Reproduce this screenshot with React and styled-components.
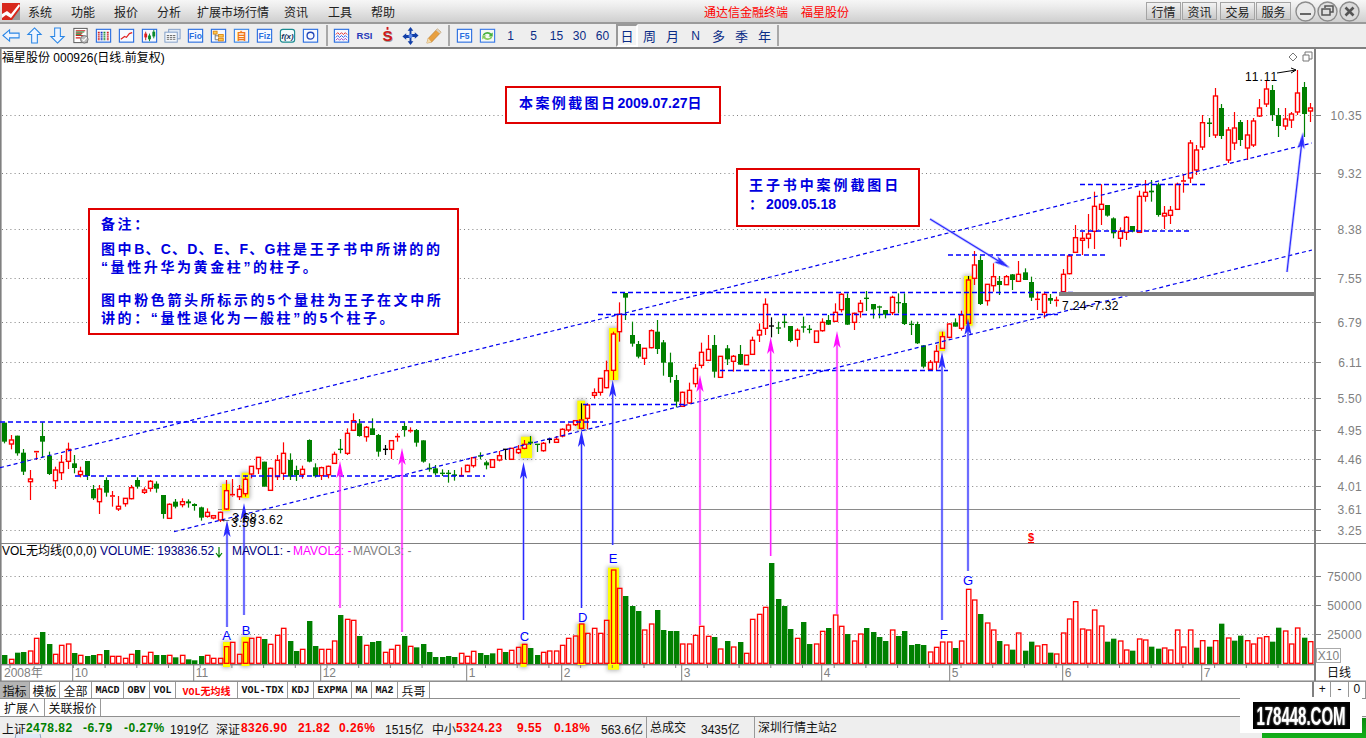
import React from 'react';
import styled, { createGlobalStyle } from 'styled-components';

const CJK = '"Liberation Sans", "Noto Sans CJK SC", sans-serif';

const Global = createGlobalStyle`
  html, body { margin: 0; padding: 0; background: #fff; overflow: hidden; }
  body { font-family: ${CJK}; font-size: 12px; color: #111; }
`;

const Page = styled.div`
  position: relative; width: 1366px; height: 738px; display: flex; flex-direction: column; overflow: hidden; background: #fff;
`;
const TitleBar = styled.div`
  height: 22px; flex: none; display: flex; align-items: center;
  background: linear-gradient(#f6f6f6, #ececec 30%, #cfcfcf);
  border-bottom: 2px solid #9a9a9a;
`;
const Logo = styled.svg`width: 18px; height: 18px; margin: 0 8px 0 2px; flex: none;`;
const MenuItem = styled.span`width: ${p => p.$w}px; flex: none; font-size: 12px; color: #222; white-space: nowrap;`;
const AppName = styled.div`
  position: relative; flex: none; width: 440px; color: #f00; font-size: 12px; white-space: nowrap; display: flex; gap: 13px; padding-left: 290px; box-sizing: border-box;
`;
const ShellGroup = styled.div`margin-left: auto; display: flex; align-items: center; padding-right: 6px;`;
const ShellButton = styled.button`
  width: 35px; height: 18px; margin-right: ${p => p.$gap}px; padding: 0; border: 1px solid #a4a4a4; background: linear-gradient(#f2f2f2, #c9c9c9);
  font: 12px ${CJK}; color: #222; display: flex; align-items: center; justify-content: center;
`;
const RoundButton = styled.svg`width: 21px; height: 21px; flex: none; margin-left: 1px;`;

const Toolbar = styled.div`
  height: 23px; flex: none; display: flex; align-items: center; background: #eeeeee; border-bottom: 2px solid #808080;
`;
const ToolSlot = styled.div`
  width: ${p => p.$w || 23}px; height: 23px; flex: none; display: flex; align-items: center; justify-content: center;
  svg { width: 19px; height: 19px; display: block; }
`;
const Sep = styled.div`width: 2px; height: 21px; flex: none; background: #a8a8a8; margin: 0 ${p => p.$r}px 0 ${p => p.$l}px;`;
const Period = styled.div`
  width: ${p => p.$w || 23}px; height: 23px; flex: none; display: flex; align-items: center; justify-content: center;
  color: #0a2c86; font-size: ${p => p.$cjk ? 13 : 12}px; box-sizing: border-box;
  margin-left: ${p => p.$ml || 0}px;
  ${p => p.$active ? 'border: 2px solid; border-color: #999 #fff #fff #999; background: #f4f4f4;' : ''}
`;

const Workspace = styled.div`position: relative; height: 632px; flex: none; background: #fff;`;
const ChartSvg = styled.svg`display: block;`;

const AxisText = styled.text`font: 12px ${CJK}; fill: #808080;`;
const AxisCJK = styled.text`font: 12px ${CJK}; fill: #111;`;
const Legend = styled.text`font: 12px ${CJK}; fill: ${p => p.$c || '#000'};`;
const PriceNote = styled.text`font: 12px ${CJK}; fill: #000; letter-spacing: ${p => p.$ls ?? 0.5}px;`;
const PointLabel = styled.text`font: 13px ${CJK}; fill: #0000ff; text-anchor: middle;`;
const DollarMark = styled.text`font: bold 11px ${CJK}; fill: #f00; text-anchor: middle; text-decoration: underline;`;

const Note = styled.div`
  position: absolute; box-sizing: border-box; left: ${p => p.$x}px; top: ${p => p.$y - 49}px; width: ${p => p.$w}px; height: ${p => p.$h}px;
  border: 2px solid #e00000; background: #fff; color: #0000e0; font: bold 14px "Liberation Sans", "Noto Sans CJK SC", sans-serif;
  padding: ${p => p.$pad}; letter-spacing: ${p => p.$ls}px; line-height: ${p => p.$lh}px; white-space: nowrap;
`;
const NoteLine = styled.div`margin-top: ${p => p.$mt || 0}px;`;
const NoteDate = styled.span`letter-spacing: 0px;`;
const NoteLatin = styled.span`letter-spacing: 1.2px;`;

const TabBar = styled.div`height: 16px; flex: none; display: flex; border-top: 1px solid #8f8f8f; border-bottom: 1px solid #8f8f8f; background: #fff;`;
const Tab = styled.div`
  width: ${p => p.$w}px; flex: none; box-sizing: border-box; display: flex; align-items: center; justify-content: center;
  border-right: 1px solid #999; background: ${p => p.$active ? '#b4b4b4' : '#fff'}; color: ${p => p.$red ? '#f00' : '#111'};
  font: ${p => p.$mono ? 'bold 10px "Liberation Mono", "Noto Sans CJK SC", monospace' : `12px ${CJK}`}; white-space: nowrap;
`;
const ZoomGroup = styled.div`margin-left: auto; display: flex; width: 52px; border-left: 2px solid #808080;`;
const ZoomCell = styled.div`flex: 1; text-align: center; font: 12px/15px ${CJK}; border-right: 1px solid #999;`;
const ExtBar = styled(TabBar)`height: 17px; border-top: none;`;
const StatusBar = styled.div`
  position: relative; height: 22px; flex: none; display: flex; align-items: center; background: #eeeeee; padding-left: 2px; box-sizing: border-box; overflow: hidden;
`;
const Stat = styled.span`
  width: ${p => p.$w}px; flex: none; white-space: nowrap; color: ${p => p.$c || '#111'};
  font: ${p => p.$b ? 'bold' : 'normal'} 12px ${CJK}; letter-spacing: ${p => p.$b ? 0.45 : 0}px;
  ${p => p.$sep ? 'border-left: 1px solid #999; height: 22px; line-height: 22px; padding-left: 3px; box-sizing: border-box;' : ''}
`;
const Globe = styled.svg`position: absolute; left: 14px; bottom: 0; width: 28px; height: 5px;`;

const GreenTab = styled.div`
  position: absolute; left: 1262px; top: 718px; width: 110px; height: 30px; border-radius: 6px; background: linear-gradient(#0c8a10, #13b21a 70%, #0a7a0e);
`;
const WatermarkBox = styled.div`
  position: absolute; left: 1240px; top: 697px; width: 122px; height: 36px; background: #fff; display: flex; align-items: center; justify-content: center;
`;
const WatermarkPill = styled.div`
  width: 97px; height: 27px; background: #000; display: flex; align-items: center; justify-content: center;
`;
const WatermarkText = styled.span`
  display: inline-block; width: 97px; text-align: center; color: #fff; font: bold 15px/27px "Liberation Sans", sans-serif; transform: scale(1, 1.7); white-space: nowrap; text-shadow: 0 0 1.5px #bbb;
`;

/* ---------- toolbar icons ---------- */
const B = '#2b6fe0';
const Frame = ({ c = B, f = '#f6f9ff' }) => <rect x="2.5" y="3.5" width="15" height="13.5" fill={f} stroke={c} strokeWidth="1.2" />;
const IconText = styled.text`font: bold ${p => p.$s || 9}px "Liberation Sans", sans-serif; fill: ${p => p.$c || B}; text-anchor: middle;`;

const ICONS = {
  back: <polygon points="1,10 8,4 8,7.5 18,7.5 18,12.5 8,12.5 8,16" fill="#eef5ff" stroke="#2a86e6" strokeWidth="1.1" />,
  up: <polygon points="10,2 17,9 13,9 13,18 7,18 7,9 3,9" fill="#eef5ff" stroke="#2a86e6" strokeWidth="1.1" />,
  down: <polygon points="10,18 17,11 13,11 13,2 7,2 7,11 3,11" fill="#eef5ff" stroke="#2a86e6" strokeWidth="1.1" />,
  report: <>
    <rect x="3" y="2.5" width="14" height="15" fill="#fff" stroke="#555" strokeWidth="1" />
    <path d="M5 5h10M5 7.5h7M5 10h8M5 12.5h5" stroke="#d02020" strokeWidth="1.1" />
    <path d="M5 6.3h9M5 8.8h6" stroke="#0a8a2a" strokeWidth="1" />
    <circle cx="14" cy="14" r="4" fill="#bbb" stroke="#777" /><path d="M12 14l1.5 1.5L16.5 12" fill="none" stroke="#fff" strokeWidth="1.2" />
  </>,
  grid: <>
    <Frame />
    <path d="M5 6v9" stroke="#d02020" strokeWidth="2" strokeDasharray="1.3 .7" />
    <path d="M8 6v9" stroke="#1030c0" strokeWidth="2" strokeDasharray="1.3 .7" />
    <path d="M11 6v9" stroke="#1a8a2a" strokeWidth="2" strokeDasharray="1.3 .7" />
    <path d="M14.5 6v9" stroke="#d02020" strokeWidth="2" strokeDasharray="1.3 .7" />
  </>,
  line: <><Frame /><polyline points="4,14 8,11 10,12 13,8 16,7" fill="none" stroke="#e02020" strokeWidth="1.2" /></>,
  candle: <>
    <Frame />
    <path d="M6 6v9" stroke="#c02020" /><rect x="4.5" y="8" width="3" height="4" fill="#e02020" />
    <path d="M10 8v8" stroke="#0a8a2a" /><rect x="8.5" y="10" width="3" height="4" fill="#0a8a2a" />
    <path d="M14.5 4v9" stroke="#0a8a2a" /><rect x="13" y="6" width="3" height="5" fill="#0a8a2a" />
  </>,
  windows: <>
    <rect x="6" y="3.5" width="12" height="10" fill="#dfe8f5" stroke="#7f9dc8" />
    <rect x="2" y="6.5" width="13" height="10.5" fill="#f4f7fb" stroke="#7f9dc8" />
    <path d="M4 10h9M4 12h9M4 14h9" stroke="#666" strokeDasharray="2.5 .8" />
  </>,
  fio: <><Frame /><IconText x="10" y="14">Fio</IconText></>,
  tree: <>
    <Frame />
    <rect x="4.5" y="5.5" width="4" height="3" fill="#ffcc55" stroke="#e08a10" /><rect x="10" y="9" width="5" height="2.6" fill="#ffcc55" stroke="#e08a10" /><rect x="10" y="13" width="5" height="2.6" fill="#ffcc55" stroke="#e08a10" />
    <path d="M6.5 8.5v6h3.5M6.5 10.3h3.5" fill="none" stroke="#777" />
  </>,
  zi: <><Frame c="#3a86e8" f="#fff6ea" /><IconText x="10" y="14.5" $s={11} $c="#f07818" style={{ fontFamily: '"Noto Sans CJK SC"' }}>自</IconText></>,
  fiz: <><Frame /><IconText x="10" y="14">Fiz</IconText></>,
  fx: <><rect x="2.5" y="3.5" width="15" height="13.5" rx="2.5" fill="#f4fbfb" stroke="#1a8a90" strokeWidth="1.2" /><IconText x="10" y="14" $s={8.5} $c="#123060" style={{ fontStyle: 'italic' }}>f(x)</IconText></>,
  circle: <><Frame /><circle cx="10" cy="10.2" r="3.6" fill="none" stroke="#2046b8" strokeWidth="1.4" /></>,
  wave: <>
    <Frame />
    <polyline points="4,9 6,7 8,9 10,7 12,9 14,7 16,9" fill="none" stroke="#e02828" />
    <polyline points="4,12 6,10 8,12 10,10 12,12 14,10 16,12" fill="none" stroke="#2c5adf" />
    <polyline points="4,15 6,13 8,15 10,13 12,15 14,13 16,15" fill="none" stroke="#a040c0" />
  </>,
  rsi: <IconText x="10" y="14" $s={10} $c="#2438b8">RSI</IconText>,
  dollar: <>
    <IconText x="10.5" y="16.5" $s={16} $c="#999">S</IconText>
    <IconText x="10" y="16" $s={16} $c="#d01818">S</IconText>
    <path d="M10 1v3" stroke="#d01818" strokeWidth="2" />
  </>,
  move: <>
    <path d="M10 1l3 4h-2v3.5h3.5v-2l4 3.5-4 3.5v-2H11V16h2l-3 4-3-4h2v-3.5H5.5v2l-4-3.5 4-3.5v2H9V5H7z" fill="#123fa8" />
    <circle cx="10" cy="10.5" r="2.2" fill="#5a86e8" />
  </>,
  pencil: <>
    <polygon points="14,3 18,6.5 8,17 3,18 4.5,13" fill="#e8a040" stroke="#b08040" strokeWidth=".6" />
    <polygon points="14,3 18,6.5 16.5,8 12.6,4.5" fill="#d8d0c0" />
    <polygon points="3,18 4.5,13 8,17" fill="#f3dcae" />
  </>,
  f5: <><Frame /><IconText x="10" y="14">F5</IconText></>,
  refresh: <>
    <rect x="2.5" y="3.5" width="15" height="13.5" fill="#f4f8f4" stroke="#3a7ae8" strokeWidth="1.2" />
    <path d="M5 10a5 4 0 0 1 9-2l1.5-1.2V11H11l1.6-1.4A3.4 3 0 0 0 6.6 10z" fill="#48b040" />
    <path d="M15 11a5 4 0 0 1-9 2l-1.5 1.2V10H9l-1.6 1.4a3.4 3 0 0 0 6 .0z" fill="#88cc60" />
  </>,
};
const ICON_A = ['back', 'up', 'down', 'report', 'grid', 'line', 'candle', 'windows', 'fio', 'tree', 'zi', 'fiz', 'fx', 'circle'];
const ICON_B = ['wave', 'rsi', 'dollar', 'move', 'pencil'];
const Tool = ({ k }) => <ToolSlot><svg viewBox="0 0 20 20">{ICONS[k]}</svg></ToolSlot>;

/* ---------- chart data ---------- */
const N = i => 4.3 + i * 6.338;
const A = [['g',68,125,68,130],['r',120,132,105,148],['g',107,160,107,167],['g',158,215,147,225],['r',237,245,210,300],['r',155,158,155,180],['g',108,125,67,172],['g',167,222,155,225],['r',210,242,200,267],['r',187,218,165,240],['r',148,184,128,207],['g',190,204,165,220],['r',214,224,200,232],['g',183,228,183,240],['g',267,295,255,300],['r',267,305,255,342],['g',240,278,232,290],['r',288,291,273,320],['r',319,327,288,333],['r',295,311,295,320],['r',263,296,255,298],['g',240,260,232,266],['r',270,277,262,282],['r',244,265,240,275],['g',251,266,244,278],['g',285,342,285,356],['r',313,355,310,357],['g',305,320,297,325],['r',305,314,295,322],['g',304,310,298,323],['g',312,318,310,332],['g',322,353,320,362],['r',337,349,325,353],['r',347,354,345,358],['r',337,360,335,366],['r',272,327,240,330],['r',284,287,237,290],['r',268,290,255,300],['r',238,281,225,290],['r',199,222,199,235],['r',172,206,172,222],['g',185,260,185,260],['r',205,271,203,272],['r',181,230,165,240],['r',160,220,127,240],['g',180,230,160,240],['g',210,225,197,243],['r',208,223,197,236],['g',120,185,118,187],['g',202,229,190,233],['r',203,227,200,240],['r',199,224,197,235],['r',163,190,155,192]];
const Bz = [['g',178,180,147,190],['r',130,190,115,195],['r',92,121,70,122],['g',100,138,87,140],['r',112,140,108,155],['g',115,135,85,135],['g',135,185,132,200],['k',178,180,165,195],['r',152,178,152,207],['r',140,142,130,155],['g',108,120,97,140],['r',122,124,112,128],['g',120,158,117,170],['g',151,215,151,218],['g',233,238,220,245],['g',235,250,225,255],['g',250,252,238,258],['g',250,252,240,278],['g',253,258,240,272],['r',257,259,232,260],['r',226,245,224,246],['r',203,227,201,233],['g',198,200,187,208],['g',217,226,212,238],['r',209,232,208,233],['r',197,210,183,214],['k',178,180,178,209],['r',175,208,175,209],['r',178,188,165,192],['r',163,175,150,178],['g',155,160,138,165],['g',163,165,163,186],['r',160,182,156,185],['k',148,150,143,160],['r',148,157,138,157],['r',118,138,115,142],['r',105,120,100,126],['r',92,104,92,108],['b',90,115,40,118],['r',45,85,40,118]];
const Cz = [['r',338,346,325,355],['r',295,337,295,347],['r',272,323,242,325],['r',162,271,155,300],['r',103,155,67,185],['g',39,53,39,120],['g',165,191,125,200],['g',192,230,183,235],['r',205,235,205,255],['r',152,203,148,205],['g',155,207,120,222],['g',187,248,180,287],['g',247,291,218,308],['g',300,365,285,382],['r',337,379,335,380],['r',331,369,308,372],['r',265,311,252,322],['r',217,256,188,265],['r',208,241,165,243],['g',195,275,165,293],['r',229,292,229,293],['g',205,238,195,255],['r',229,244,225,275],['g',222,254,195,255],['r',226,254,225,255],['r',181,223,170,225],['r',151,165,130,186],['r',73,145,55,165],['k',138,140,112,172],['g',144,148,125,162],['g',127,130,105,143],['g',138,183,138,187],['r',151,178,145,200],['g',141,144,110,158],['g',148,152,135,160],['r',153,187,153,188],['r',127,152,115,155],['g',120,134,105,135],['r',97,124,70,125],['r',43,89,40,97],['g',54,134,40,135],['r',100,127,98,150],['r',70,95,60,113],['g',55,59,33,93],['g',72,88,72,116],['g',81,85,77,115],['g',90,104,90,115],['r',52,98,47,105],['g',68,70,40,100],['g',69,132,40,135],['g',133,135,122,165],['g',132,190,125,192],['g',196,260,196,265],['r',247,268,240,270],['r',214,246,195,270]];
const Dz = [['r',500,535,485,537],['r',462,502,460,505],['g',457,470,445,470],['r',435,475,422,482],['b',330,460,318,467],['r',285,325,243,345],['g',270,402,258,405],['r',343,392,343,407],['r',320,347,280,365],['g',333,345,318,375],['r',320,344,315,345],['g',313,330,312,360],['r',313,334,273,335],['g',307,330,295,330],['g',336,383,320,393],['r',388,391,365,420],['r',373,427,365,445],['g',384,392,372,402],['r',391,394,380,410],['r',313,365,297,367],['r',258,311,252,313],['r',203,247,165,248],['r',205,211,185,255],['r',192,205,132,235],['r',109,184,65,237],['r',103,118,43,165],['g',105,137,105,140],['g',145,190,142,205],['r',184,205,172,230],['r',142,187,138,210],['g',168,185,168,187],['r',79,187,62,188],['r',67,79,30,95],['g',62,67,30,95],['g',43,135,38,140],['r',130,138,108,177],['r',121,136,108,162],['r',43,118,38,120],['r',33,37,12,68]];
const Ez = [['r',143,178,140,183],['r',150,170,145,175],['r',122.7,147,115,150],['g',122.5,124,118,137],['r',96,135,88,138],['g',108,136,104,139],['r',130,160,127,163],['r',128,143,112,150],['g',122,140,120,146],['r',135,148,120,160],['r',121,145,118,147],['r',108,116,99,117],['r',89,104,81,107],['g',90,115,85,121],['g',115,126,108,137],['r',119,126,108,130],['r',114,120,112,128],['r',93,112,70,115],['g',87,114,82,137],['r',108,111,103,122]];
const conv = (arr, base) => arr.map(([k, t, b, h, l]) => [k, base + t / 3, base + b / 3, base + h / 3, base + l / 3]);
const CANDLES = [...conv(A, 400), ...conv(Bz, 390), ...conv(Cz, 280), ...conv(Dz, 170), ...Ez];

const parseVol = (s, base) => s.trim().split(/\s+/).map(t => [t[0], (base - Number(t.slice(1))) / 3]);
const VOLS = [
  ...parseVol('g345 r358 g338 g336 r333 r295 g276 g312 r343 r316 r312 g339 r346 g348 g345 r344 g330 r349 r349 r355 r343 g330 r349 r337 g345 g345 r346 g352 r346 g358 g361 g348 r346 r355 r355 r320 r307 r343 r307 r295 r292 g297 r313 r286 r265 g303 g333 r328 g243 g318 r328 r328 r303 g225', 372),
  ...parseVol('r208 r211 g258 r286 g276 g273 r307 r298 r286 g258 r289 g292 g282 g306 g321 g321 g318 g321 r310 r319 r304 g309 g315 g310 r298 g306 r301 r292 r283 g294 g315 r307 r303 r303 r286 r265 r258 r222 r250 r235 r250 r211 r60 r115 g138 g168 g183 r240 r222 g180 g240 g243 g243 r282 r282 r256 r229 r259 g261 r297 g273 r291 g276 r310 r208 r193 r172 g39 g147 g168 g237 r265 g216 g282 r282 r244 g234 r195 r229 g252 r273 r252 g234 g246 g261 g273 r240 g258 g243 g285 g282 g285 r306 r292 r276 r276 g294 r273 r118 r150 g192 r219 r240 g273 r285', 342),
  ...parseVol('g147 r97 g150 g123 r136 r132 g156 r160 r97 r55 r3 r85 r88 r28 r76 g123 g114 r121 r148 g150 r115 r118 g138 g144 r142 r148 r88 r139 r88 g141 r120 g138 r120 g69 r112 g120 g105 r120 r130 r112 r108 g123 g81 r91 r130 r82 g111 r123', 190),
];

const COL = { r: '#ff0000', g: '#008000', k: '#000', b: '#ff0000' };
const GRID = [[115, '10.35'], [173, '9.32'], [229, '8.38'], [278, '7.55'], [322, '6.79'], [362, '6.11'], [398, '5.50'], [430, '4.95'], [459, '4.46'], [486, '4.01'], [509, '3.61'], [530, '3.25']];
const VGRID = [[576, '75000'], [605, '50000'], [634, '25000']];
const MONTHS = [[72.7, '10'], [193.7, '11'], [320.7, '12'], [466.7, '1'], [561.7, '2'], [681.7, '3'], [821.7, '4'], [949.7, '5'], [1062.7, '6'], [1201.7, '7']];
const HL = [[222, 484, 8, 27], [241.7, 472.7, 7.5, 25.3], [521, 436.7, 11, 21.3], [577.3, 400.7, 7.7, 28.3], [609, 328, 9.3, 52], [939, 331.7, 6, 19.3], [964, 276, 8.7, 49.7], [223, 642, 7, 25], [241.5, 637, 8, 29], [520.5, 644, 6, 23], [577.5, 624, 8, 41], [608, 567.7, 11, 102]];
const HDASH = [[0, 603, 422], [75, 485, 476], [583, 685, 404.5], [612, 1075, 292.5], [598, 1058, 314.5], [720, 948, 370.5], [948, 1106, 255], [1080, 1192, 231], [1080, 1208, 184.5]];
const BLUE_ARROWS = [[227, 627, 227, 520], [244, 615, 244, 503], [523.5, 620, 523.5, 462], [581.5, 608, 581.5, 430], [612.7, 545, 612.7, 380], [942, 620, 942, 352], [968, 571, 968, 318], [1287, 272, 1303, 132], [930, 219, 1010, 268]];
const PINK_ARROWS = [[340, 608, 340, 461], [402, 632, 402, 448], [700, 625, 700, 375], [770.7, 556, 770.7, 337], [837, 614, 837, 331]];

const Arrow = ({ x1, y1, x2, y2, c, halo }) => {
  const len = Math.hypot(x2 - x1, y2 - y1);
  const ang = (Math.atan2(y2 - y1, x2 - x1) * 180) / Math.PI + 90;
  return (
    <g transform={`translate(${x2} ${y2}) rotate(${ang})`}>
      <line x1="0" y1="13" x2="0" y2={len} stroke={halo} strokeWidth="2.8" opacity=".4" />
      <line x1="0" y1="13" x2="0" y2={len} stroke={c} strokeWidth="1.2" />
      <polygon points="0,0 3.6,17 0,13 -3.6,17" fill={c} filter="url(#soft)" />
    </g>
  );
};

const Candle = ({ i, d }) => {
  const [k, t, b, h, l] = d;
  const x = Math.round(N(i)) + 0.5;
  const c = COL[k];
  const wick = k === 'b' ? '#000' : c;
  const thin = b - t < 1.4;
  return (
    <g>
      {k === 'r' || k === 'b' ? (
        <>
          <line x1={x} x2={x} y1={h} y2={t} stroke={wick} strokeWidth="1.2" />
          <line x1={x} x2={x} y1={b} y2={l} stroke={wick} strokeWidth="1.2" />
          {thin ? <line x1={x - 2.5} x2={x + 2.5} y1={t} y2={t} stroke={c} strokeWidth="1.6" />
            : <rect x={x - 2} y={t} width="4" height={b - t} fill={k === 'b' ? 'none' : '#fff'} stroke={c} strokeWidth="1.4" />}
        </>
      ) : (
        <>
          <line x1={x} x2={x} y1={h} y2={l} stroke={c} strokeWidth="1.2" />
          {thin ? <line x1={x - 2.5} x2={x + 2.5} y1={t} y2={t} stroke={c} strokeWidth="1.4" />
            : <rect x={x - 2.5} y={t} width="5" height={Math.max(b - t, 1.4)} fill={c} />}
        </>
      )}
    </g>
  );
};

const TICKS = Array.from({ length: 41 }, (_, i) => 10 + i * 31.7);

const Chart = () => (
  <ChartSvg width="1366" height="632" viewBox="0 49 1366 632">
    <defs>
      <filter id="halo" x="-100%" y="-30%" width="300%" height="160%"><feGaussianBlur stdDeviation="2" /></filter>
      <filter id="soft" x="-50%" y="-20%" width="200%" height="140%"><feGaussianBlur stdDeviation=".35" /></filter>
    </defs>
    <rect x="0" y="49" width="1.6" height="632" fill="#808080" />
    <rect x="1314" y="49" width="2" height="632" fill="#808080" />
    <rect x="0" y="543" width="1366" height="1" fill="#808080" />
    <rect x="0" y="664" width="1316" height="1.4" fill="#808080" />
    <rect x="0" y="680.5" width="1366" height="1" fill="#808080" />

    <Legend x="2" y="62">福星股份 000926(日线.前复权)</Legend>
    <path d="M1293 53l4 4-4 4-4-4z" fill="none" stroke="#777" />
    <path d="M1305 55v-3h7v7h-3M1303 55h6v6h-6z" fill="none" stroke="#777" />

    {[...GRID, ...VGRID].map(([y, t]) => (
      <g key={t}>
        {t !== '3.61' && <line x1="2" x2="1314" y1={y + 0.5} y2={y + 0.5} stroke="#808080" strokeDasharray="1 3.2" />}
        <line x1="1316" x2="1321" y1={y + 0.5} y2={y + 0.5} stroke="#808080" />
        <AxisText x="1362" y={y + 4.5} textAnchor="end" style={{ letterSpacing: '.3px' }}>{t}</AxisText>
      </g>
    ))}
    <line x1="218" x2="1314" y1="509.5" y2="509.5" stroke="#8a8a8a" />

    {HL.map(([x, y, w, h], i) => (
      <g key={i}>
        <rect x={x - 1} y={y - 1} width={w + 2} height={h + 2} fill="#777" opacity=".55" filter="url(#halo)" />
        <rect x={x} y={y} width={w} height={h} fill="#ffff00" />
      </g>
    ))}

    {CANDLES.map((d, i) => <Candle key={i} i={i} d={d} />)}

    {VOLS.map(([k, h], i) => {
      const x = Math.round(N(i)) + 0.5;
      return k === 'g'
        ? <rect key={i} x={x - 2.5} y={664 - h} width="5.4" height={h} fill="#008000" />
        : <rect key={i} x={x - 2} y={664 - h} width="4.4" height={h - 0.7} fill="none" stroke="#ff0000" strokeWidth="1.3" />;
    })}

    <line x1="0" y1="467.7" x2="1312" y2="143" stroke="#0000f0" strokeWidth="1.2" strokeDasharray="4 3" />
    <line x1="174" y1="531.7" x2="1312" y2="250" stroke="#0000f0" strokeWidth="1.2" strokeDasharray="4 3" />
    {HDASH.map(([a, b, y]) => <line key={a + '-' + y} x1={a} x2={b} y1={y} y2={y} stroke="#0000ff" strokeWidth="1.3" strokeDasharray="5 3" />)}
    <rect x="1059" y="292" width="255" height="4" fill="#808080" />

    {BLUE_ARROWS.map(a => <Arrow key={a[0]} x1={a[0]} y1={a[1]} x2={a[2]} y2={a[3]} c="#2a2aff" halo="#8a8aff" />)}
    {PINK_ARROWS.map(a => <Arrow key={a[0]} x1={a[0]} y1={a[1]} x2={a[2]} y2={a[3]} c="#ff10ff" halo="#ff90ff" />)}

    <PriceNote x="220" y="522" $ls={0.3}>←3.68</PriceNote>
    <PriceNote x="231" y="527">3.59</PriceNote>
    <PriceNote x="258" y="524">3.62</PriceNote>
    <PriceNote x="1062" y="310" $ls={0.35}>7.24~7.32</PriceNote>
    <PriceNote x="1245" y="81" $ls={1}>11.11</PriceNote>
    <path d="M1277 73l19-3M1291 68l5 2-5 3" fill="none" stroke="#000" />

    {[['A', 226.7, 640], ['B', 246, 635], ['C', 524.5, 641], ['D', 582.7, 622], ['E', 613, 563], ['F', 943.8, 639], ['G', 968, 585]].map(([t, x, y]) => <PointLabel key={t} x={x} y={y}>{t}</PointLabel>)}
    <DollarMark x="1031" y="541">$</DollarMark>

    <Legend x="2" y="555">VOL无均线(0,0,0)</Legend>
    <Legend x="100" y="555" $c="#000080">VOLUME: 193836.52</Legend>
    <path d="M219 547v9M216 553l3 4 3-4" fill="none" stroke="#008000" strokeWidth="1.2" />
    <Legend x="232" y="555" $c="#000080">MAVOL1: -</Legend>
    <Legend x="293" y="555" $c="#ff00ff">MAVOL2: -</Legend>
    <Legend x="353" y="555" $c="#808080">MAVOL3: -</Legend>

    <rect x="1316.5" y="648.5" width="24" height="14" fill="#fff" stroke="#aaa" />
    <AxisText x="1328.5" y="660" textAnchor="middle">X10</AxisText>

    {TICKS.map(x => <line key={x} x1={x} x2={x} y1="665" y2="668" stroke="#808080" />)}
    <AxisText x="4" y="677">2008年</AxisText>
    {MONTHS.map(([x, t]) => (
      <g key={t}>
        <line x1={x} x2={x} y1="665" y2="681" stroke="#808080" />
        <AxisText x={x + 2} y="677">{t}</AxisText>
      </g>
    ))}
    <AxisCJK x="1339" y="677" textAnchor="middle">日线</AxisCJK>
  </ChartSvg>
);

const TABS = [['指标', 30, { active: true }], ['模板', 30], ['全部', 32], ['MACD', 32, { mono: 1 }], ['OBV', 26, { mono: 1 }], ['VOL', 26, { mono: 1 }], ['VOL无均线', 62, { mono: 1, red: 1 }], ['VOL-TDX', 50, { mono: 1 }], ['KDJ', 26, { mono: 1 }], ['EXPMA', 38, { mono: 1 }], ['MA', 20, { mono: 1 }], ['MA2', 26, { mono: 1 }], ['兵哥', 32]];
const STATS = [
  ['上证', 24], ['2478.82', 57, '#008000', 1], ['-6.79', 41, '#008000', 1], ['-0.27%', 46, '#008000', 1], ['1919亿', 46],
  ['深证', 25], ['8326.90', 57, '#f00', 1], ['21.82', 41, '#f00', 1], ['0.26%', 46, '#f00', 1], ['1515亿', 47],
  ['中小', 24], ['5324.23', 61, '#f00', 1], ['9.55', 37, '#f00', 1], ['0.18%', 47, '#f00', 1], ['563.6亿', 45],
];
const MENUS = [['系统', 43], ['功能', 43], ['报价', 43], ['分析', 40], ['扩展市场行情', 87], ['资讯', 44], ['工具', 43], ['帮助', 43]];

export default function App() {
  return (
    <Page>
      <Global />
      <TitleBar>
        <Logo viewBox="0 0 18 18">
          <rect width="18" height="17" y="1" fill="#d8281c" />
          <path d="M0 12l5-3 4 3 8-10 1 2-9 12-5-3-4 3z" fill="#fff" />
          <path d="M10 18l8-11v11z" fill="#9b9b9b" />
        </Logo>
        {MENUS.map(([t, w]) => <MenuItem key={t} $w={w}>{t}</MenuItem>)}
        <AppName><span>通达信金融终端</span><span>福星股份</span></AppName>
        <ShellGroup>
          <ShellButton $gap={1}>行情</ShellButton>
          <ShellButton $gap={3}>资讯</ShellButton>
          <ShellButton $gap={1}>交易</ShellButton>
          <ShellButton $gap={3}>服务</ShellButton>
          <RoundButton viewBox="0 0 21 21">
            <circle cx="10.5" cy="10.5" r="9.5" fill="#e9e9e9" stroke="#8c8c8c" strokeWidth="1.4" />
            <rect x="5" y="12" width="11" height="2" fill="#666" />
          </RoundButton>
          <RoundButton viewBox="0 0 21 21">
            <circle cx="10.5" cy="10.5" r="9.5" fill="#dedede" stroke="#8c8c8c" strokeWidth="1.4" />
            <path d="M8 7V5h8v6h-3M5 8h8v6H5z" fill="none" stroke="#555" strokeWidth="1.5" />
          </RoundButton>
          <RoundButton viewBox="0 0 21 21">
            <circle cx="10.5" cy="10.5" r="9.5" fill="#dadada" stroke="#8c8c8c" strokeWidth="1.4" />
            <path d="M6.5 6.5l8 8M14.5 6.5l-8 8" stroke="#555" strokeWidth="2.6" />
          </RoundButton>
        </ShellGroup>
      </TitleBar>

      <Toolbar>
        {ICON_A.map(k => <Tool key={k} k={k} />)}
        <Sep $l={4} $r={2} />
        {ICON_B.map(k => <Tool key={k} k={k} />)}
        <Sep $l={3} $r={3} />
        <Tool k="f5" />
        <Tool k="refresh" />
        {['1', '5', '15', '30', '60'].map(t => <Period key={t}>{t}</Period>)}
        <Period $cjk $active $w={22} $ml={2}>日</Period>
        {['周', '月', 'N', '多', '季', '年'].map(t => <Period key={t} $cjk={t !== 'N'}>{t}</Period>)}
        <Sep $l={1} $r={0} />
      </Toolbar>

      <Workspace>
        <Chart />
        <Note $x={505} $y={86} $w={216} $h={38} $pad="5px 0 0 12px" $ls={2.4} $lh={20}>
          本案例截图日<NoteDate>2009.07.27</NoteDate>日
        </Note>
        <Note $x={736} $y={168} $w={184} $h={59} $pad="6px 0 0 11px" $ls={2.9} $lh={19}>
          <NoteLine>王子书中案例截图日</NoteLine>
          <NoteLine>：<NoteDate>2009.05.18</NoteDate></NoteLine>
        </Note>
        <Note $x={88} $y={208} $w={371} $h={127} $pad="5px 0 0 11px" $ls={2.6} $lh={18}>
          <NoteLine>备注：</NoteLine>
          <NoteLine $mt={7}>图中<NoteLatin>B、C、D、E、F、G</NoteLatin>柱是王子书中所讲的的</NoteLine>
          <NoteLine>“量性升华为黄金柱”的柱子。</NoteLine>
          <NoteLine $mt={15}>图中粉色箭头所标示的5个量柱为王子在文中所</NoteLine>
          <NoteLine>讲的：“量性退化为一般柱”的5个柱子。</NoteLine>
        </Note>
      </Workspace>

      <TabBar>
        {TABS.map(([t, w, o = {}]) => <Tab key={t} $w={w} $active={o.active} $mono={o.mono} $red={o.red}>{t}</Tab>)}
        <ZoomGroup><ZoomCell>+</ZoomCell><ZoomCell>-</ZoomCell><ZoomCell>0</ZoomCell></ZoomGroup>
      </TabBar>
      <ExtBar>
        <Tab $w={45}>扩展∧</Tab>
        <Tab $w={56}>关联报价</Tab>
      </ExtBar>
      <StatusBar>
        {STATS.map(([t, w, c, b]) => <Stat key={t} $w={w} $c={c} $b={b}>{t}</Stat>)}
        <Stat $w={55} $sep>总成交</Stat>
        <Stat $w={53}>3435亿</Stat>
        <Stat $w={140} $sep>深圳行情主站2</Stat>
        <Globe viewBox="0 0 28 5"><path d="M1 5a13 13 0 0 1 26 0" fill="#dfe9f7" stroke="#8fa3c0" /></Globe>
      </StatusBar>

      <GreenTab />
      <WatermarkBox><WatermarkPill><WatermarkText>178448.COM</WatermarkText></WatermarkPill></WatermarkBox>
    </Page>
  );
}
